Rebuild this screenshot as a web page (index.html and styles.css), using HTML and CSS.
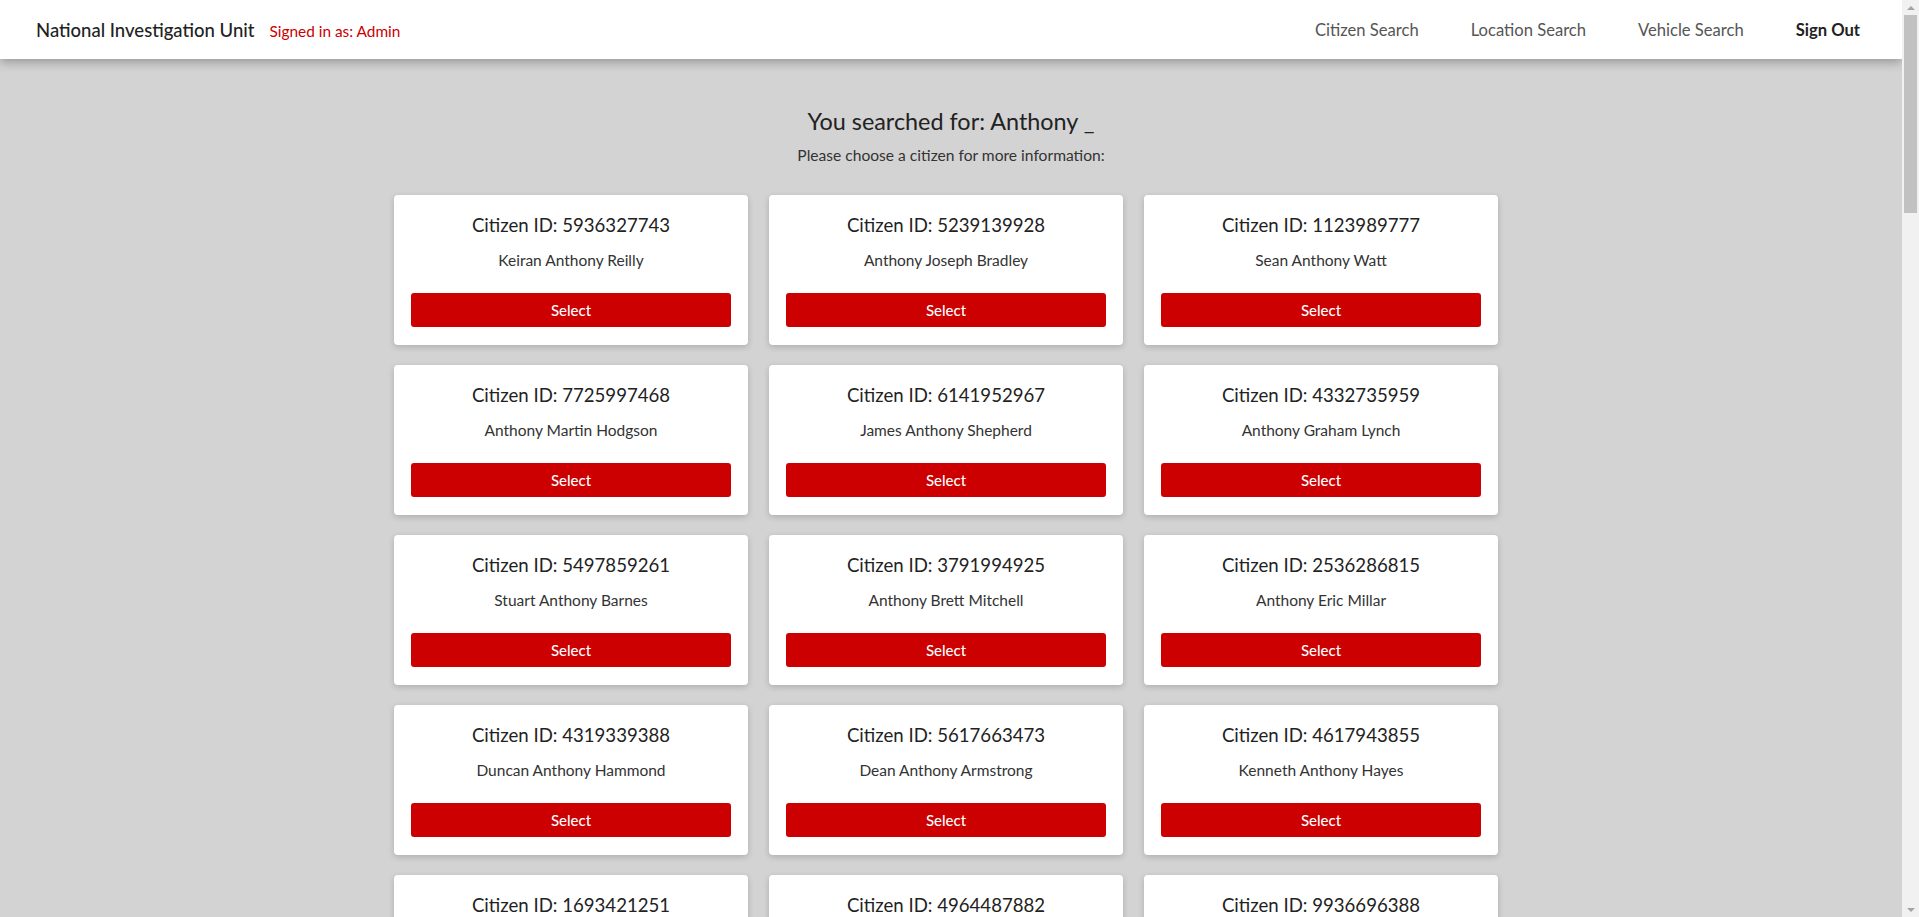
FILE: index.html
```html
<!DOCTYPE html>
<html lang="en">
<head>
<meta charset="utf-8">
<title>National Investigation Unit</title>
<link rel="stylesheet" href="styles.css">
</head>
<body>
<header class="topbar">
  <div class="brand">
    <span class="brand-name">National Investigation Unit</span>
    <span class="signed-in">Signed in as: Admin</span>
  </div>
  <nav class="nav">
    <a class="nav-link" href="#">Citizen Search</a>
    <a class="nav-link" href="#">Location Search</a>
    <a class="nav-link" href="#">Vehicle Search</a>
    <a class="nav-link nav-strong" href="#">Sign Out</a>
  </nav>
</header>
<main class="content">
  <h1 class="search-title">You searched for: Anthony _</h1>
  <p class="search-sub">Please choose a citizen for more information:</p>
  <div class="results">
    <div class="card"><h5 class="card-id">Citizen ID: 5936327743</h5><p class="card-name">Keiran Anthony Reilly</p><button class="btn">Select</button></div>
    <div class="card"><h5 class="card-id">Citizen ID: 5239139928</h5><p class="card-name">Anthony Joseph Bradley</p><button class="btn">Select</button></div>
    <div class="card"><h5 class="card-id">Citizen ID: 1123989777</h5><p class="card-name">Sean Anthony Watt</p><button class="btn">Select</button></div>
    <div class="card"><h5 class="card-id">Citizen ID: 7725997468</h5><p class="card-name">Anthony Martin Hodgson</p><button class="btn">Select</button></div>
    <div class="card"><h5 class="card-id">Citizen ID: 6141952967</h5><p class="card-name">James Anthony Shepherd</p><button class="btn">Select</button></div>
    <div class="card"><h5 class="card-id">Citizen ID: 4332735959</h5><p class="card-name">Anthony Graham Lynch</p><button class="btn">Select</button></div>
    <div class="card"><h5 class="card-id">Citizen ID: 5497859261</h5><p class="card-name">Stuart Anthony Barnes</p><button class="btn">Select</button></div>
    <div class="card"><h5 class="card-id">Citizen ID: 3791994925</h5><p class="card-name">Anthony Brett Mitchell</p><button class="btn">Select</button></div>
    <div class="card"><h5 class="card-id">Citizen ID: 2536286815</h5><p class="card-name">Anthony Eric Millar</p><button class="btn">Select</button></div>
    <div class="card"><h5 class="card-id">Citizen ID: 4319339388</h5><p class="card-name">Duncan Anthony Hammond</p><button class="btn">Select</button></div>
    <div class="card"><h5 class="card-id">Citizen ID: 5617663473</h5><p class="card-name">Dean Anthony Armstrong</p><button class="btn">Select</button></div>
    <div class="card"><h5 class="card-id">Citizen ID: 4617943855</h5><p class="card-name">Kenneth Anthony Hayes</p><button class="btn">Select</button></div>
    <div class="card"><h5 class="card-id">Citizen ID: 1693421251</h5><p class="card-name">Anthony Paul Fraser</p><button class="btn">Select</button></div>
    <div class="card"><h5 class="card-id">Citizen ID: 4964487882</h5><p class="card-name">Mark Anthony Sinclair</p><button class="btn">Select</button></div>
    <div class="card"><h5 class="card-id">Citizen ID: 9936696388</h5><p class="card-name">Anthony David Grant</p><button class="btn">Select</button></div>
  </div>
</main>
<div class="scrollbar" aria-hidden="true">
  <div class="sb-btn sb-up"><span class="tri-up"></span></div>
  <div class="sb-track"><div class="sb-thumb"></div></div>
  <div class="sb-btn sb-down"><span class="tri-down"></span></div>
</div>
</body>
</html>
```
FILE: styles.css
```css
html, body {
  margin: 0;
  padding: 0;
}
body {
  background: #d3d3d3;
  font-family: "Lato", "Open Sans", sans-serif;
  color: #222;
  margin-right: 17px;
}
.topbar {
  position: sticky;
  top: 0;
  z-index: 10;
  height: 59px;
  background: #fff;
  box-shadow: 0 3px 10px rgba(0, 0, 0, 0.3);
  display: flex;
  align-items: center;
  justify-content: space-between;
  padding: 0 42px 0 36px;
  box-sizing: border-box;
}
.brand {
  display: flex;
  align-items: baseline;
  gap: 15px;
}
.brand-name {
  font-size: 18.5px;
  color: #222;
  font-weight: 500;
}
.signed-in {
  font-size: 15.4px;
  color: #cc0000;
}
.nav {
  display: flex;
  align-items: center;
  gap: 52px;
}
.nav-link {
  font-size: 16.6px;
  color: #555;
  text-decoration: none;
}
.nav-strong {
  color: #222;
  font-weight: 700;
}
.content {
  padding: 48px 0 40px;
  display: flex;
  flex-direction: column;
  align-items: center;
}
.search-title {
  margin: 0;
  font-size: 23.4px;
  line-height: 28px;
  font-weight: 400;
  color: #222;
}
.search-sub {
  margin: 9px 0 0;
  font-size: 15.6px;
  line-height: 22px;
  color: #333;
}
.results {
  margin-top: 29px;
  width: 1104px;
  padding-right: 10px;
  display: grid;
  grid-template-columns: repeat(3, 354px);
  column-gap: 21px;
  row-gap: 20px;
}
.card {
  background: #fff;
  border-radius: 4px;
  box-shadow: 0 2px 6px rgba(0, 0, 0, 0.18);
  padding: 17px 17px 18px;
  display: flex;
  flex-direction: column;
  align-items: center;
  box-sizing: border-box;
  height: 150px;
}
.card-id {
  margin: 0;
  font-size: 18.6px;
  line-height: 26px;
  font-weight: 400;
  color: #222;
}
.card-name {
  margin: 10px 0 0;
  font-size: 15.5px;
  line-height: 24px;
  color: #333;
}
.btn {
  margin-top: auto;
  width: 100%;
  height: 34px;
  border: 0;
  border-radius: 3px;
  background: #cc0000;
  color: #fff;
  font-family: inherit;
  font-size: 15px;
  font-weight: 500;
  cursor: pointer;
}
.scrollbar {
  position: fixed;
  top: 0;
  right: 0;
  width: 17px;
  height: 100vh;
  background: #f1f1f1;
  display: flex;
  flex-direction: column;
  z-index: 20;
}
.sb-btn {
  height: 15px;
  display: flex;
  align-items: center;
  justify-content: center;
  flex: none;
}
.tri-up {
  width: 0;
  height: 0;
  border-left: 4px solid transparent;
  border-right: 4px solid transparent;
  border-bottom: 4px solid #a3a3a3;
}
.tri-down {
  width: 0;
  height: 0;
  border-left: 4px solid transparent;
  border-right: 4px solid transparent;
  border-top: 4px solid #a3a3a3;
}
.sb-track {
  flex: 1;
  padding: 0 2px;
}
.sb-thumb {
  height: 198px;
  background: #c1c1c1;
}
```
